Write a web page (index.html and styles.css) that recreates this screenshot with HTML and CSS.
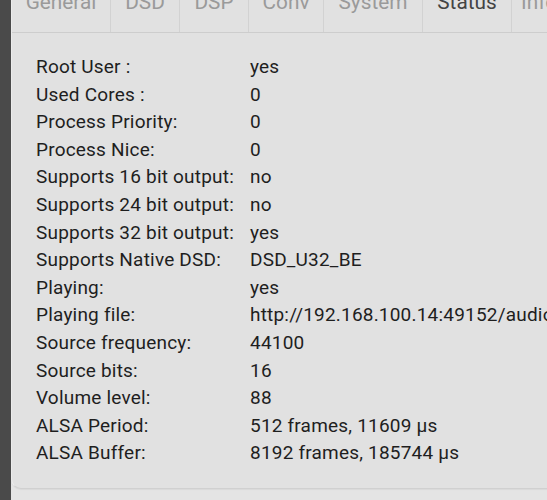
FILE: index.html
```html
<!DOCTYPE html>
<html>
<head>
<meta charset="utf-8">
<link rel="stylesheet" href="styles.css">
</head>
<body>
<div class="page">
  <div class="side"></div>
  <div class="main">
    <div class="panel">
      <div class="tabs">
        <div class="tab t1">General</div>
        <div class="tab t2">DSD</div>
        <div class="tab t3">DSP</div>
        <div class="tab t4">Conv</div>
        <div class="tab t5">System</div>
        <div class="tab t6 active">Status</div>
        <div class="tab t7">Info</div>
      </div>
      <div class="body">
        <div class="grid">
          <div class="k">Root User :</div><div class="v">yes</div>
          <div class="k">Used Cores :</div><div class="v">0</div>
          <div class="k">Process Priority:</div><div class="v">0</div>
          <div class="k">Process Nice:</div><div class="v">0</div>
          <div class="k">Supports 16 bit output:</div><div class="v">no</div>
          <div class="k">Supports 24 bit output:</div><div class="v">no</div>
          <div class="k">Supports 32 bit output:</div><div class="v">yes</div>
          <div class="k">Supports Native DSD:</div><div class="v">DSD_U32_BE</div>
          <div class="k">Playing:</div><div class="v">yes</div>
          <div class="k">Playing file:</div><div class="v">http://192.168.100.14:49152/audio/track.flac</div>
          <div class="k">Source frequency:</div><div class="v">44100</div>
          <div class="k">Source bits:</div><div class="v">16</div>
          <div class="k">Volume level:</div><div class="v">88</div>
          <div class="k">ALSA Period:</div><div class="v">512 frames, 11609 µs</div>
          <div class="k">ALSA Buffer:</div><div class="v">8192 frames, 185744 µs</div>
        </div>
      </div>
    </div>
  </div>
</div>
</body>
</html>
```
FILE: styles.css
```css
html, body {
  margin: 0;
  padding: 0;
  width: 547px;
  height: 500px;
  overflow: hidden;
  background: #e4e4e4;
  font-family: Roboto, "Liberation Sans", sans-serif;
}
.page {
  display: flex;
  height: 500px;
}
.side {
  width: 11px;
  flex: none;
  background: #4a4a4a;
}
.main {
  flex: none;
  width: 620px;
  background: #e4e4e4;
}
.panel {
  width: 640px;
  background: #e1e1e1;
  border: 1px solid #d0d0d0;
  border-left-color: #ebebeb;
  border-top: none;
  border-radius: 0 0 10px 10px;
  height: 489px;
  box-sizing: border-box;
  box-shadow: 0 1px 1px rgba(0,0,0,0.05);
}
.tabs {
  display: flex;
  height: 32px;
  border-bottom: 1px solid #cdcdcd;
  overflow: hidden;
}
.tab {
  flex: none;
  box-sizing: border-box;
  border-right: 1px solid #d2d2d2;
  color: #9a9a9a;
  font-size: 20.8px;
  line-height: 20px;
  margin-top: -8px;
  height: 40px;
  text-align: center;
}
.tab.active { color: #444; }
.t1 { width: 99px; }
.t2 { width: 69px; }
.t3 { width: 69px; }
.t4 { width: 75px; }
.t5 { width: 99px; }
.t6 { width: 89px; }
.t7 { width: 80px; text-align: left; padding-left: 9px; border-right: none; }
.body {
  padding: 20px 0 0 24px;
}
.grid {
  display: grid;
  grid-template-columns: 214px auto;
  font-size: 19px;
  letter-spacing: 0.2px;
  line-height: 27.6px;
  color: #1e1e1e;
}
.v { white-space: nowrap; }
```
